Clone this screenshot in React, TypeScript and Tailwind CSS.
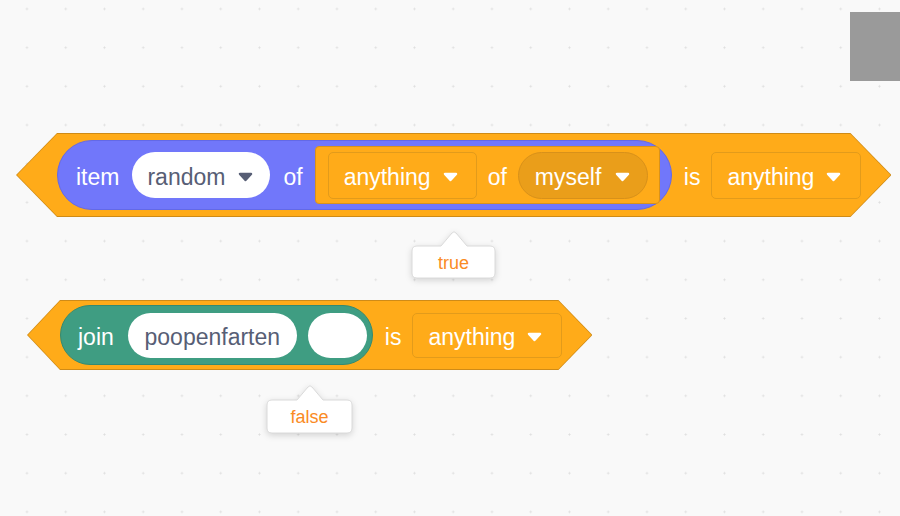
import React from 'react';

const font = "font-['Liberation_Sans',Arial,Helvetica,sans-serif]";

function Arrow(props: { dark?: boolean }) {
  const color = props.dark ? '#575E75' : '#FFFFFF';
  return (
    <svg width="15" height="10" viewBox="0 0 15 10" className="mt-[3px] shrink-0">
      <path
        d="M2 2 H13 L7.5 8 Z"
        fill={color}
        stroke={color}
        strokeWidth="2.5"
        strokeLinejoin="round"
      />
    </svg>
  );
}

function Label(props: { children: React.ReactNode; className?: string }) {
  return <span className={`pt-[4px] ${props.className || 'text-white'}`}>{props.children}</span>;
}

function Dropdown(props: { label: string; h: string; w: string }) {
  return (
    <div
      className={`flex items-center ${props.h} ${props.w} shrink-0 rounded-[5px] border border-[#E29B1B] bg-[#FFAB19] pl-[15px] pr-[18px] gap-[12px]`}
    >
      <Label>{props.label}</Label>
      <Arrow />
    </div>
  );
}

function Tooltip(props: { text: string; left: number; top: number; width: number; height: number; tip: number }) {
  const { width: w, height: h, tip } = props;
  const r = 5;
  const y0 = 17;
  const x1 = w + 1;
  const y1 = y0 + h;
  const d = `M${1 + r} ${y0} H${tip - 13} L${tip - 2} 4 Q${tip} 1.5 ${tip + 2} 4 L${tip + 13} ${y0} H${x1 - r} Q${x1} ${y0} ${x1} ${y0 + r} V${y1 - r} Q${x1} ${y1} ${x1 - r} ${y1} H${1 + r} Q1 ${y1} 1 ${y1 - r} V${y0 + r} Q1 ${y0} ${1 + r} ${y0} Z`;
  return (
    <div className="absolute" style={{ left: props.left, top: props.top, width: w + 2, height: y1 + 1 }}>
      <svg width={w + 2} height={y1 + 1} className="absolute inset-0 drop-shadow-[0_2px_3px_rgba(0,0,0,0.15)]">
        <path d={d} fill="#FFFFFF" stroke="#DADADA" strokeWidth="1" />
      </svg>
      <div className="absolute left-0 right-0 top-[17px] bottom-0 flex items-center justify-center text-[18px] text-[#FA8B24]">
        {props.text}
      </div>
    </div>
  );
}

export default function App() {
  return (
    <div
      className={`relative w-[900px] h-[516px] overflow-hidden bg-[#F9F9F9] ${font} text-[23px] leading-none bg-[radial-gradient(circle,#DEDEDE_0.8px,transparent_1.3px)] bg-[size:38.75px_38.7px] bg-[position:7.6px_-10.4px]`}
    >
      {/* scroll handle */}
      <div className="absolute top-[12px] right-0 w-[50px] h-[69px] bg-[#9A9A9A]" />

      {/* block 1 */}
      <div className="absolute left-[16px] top-[133px] h-[84px] bg-[#CF8B17] p-px [clip-path:polygon(0_50%,41px_0,calc(100%-41px)_0,100%_50%,calc(100%-41px)_100%,41px_100%)]">
        <div className="flex h-full items-center gap-[11px] bg-[#FFAB19] pl-[40px] pr-[29px] [clip-path:polygon(0_50%,40px_0,calc(100%-40px)_0,100%_50%,calc(100%-40px)_100%,40px_100%)]">
          <div className="flex h-[70px] items-center gap-[13px] rounded-full border border-[#6369E6] bg-[#7177FA] pl-[18px] pr-[11px]">
            <Label>item</Label>
            <div className="flex h-[46px] w-[138px] items-center gap-[13px] rounded-full bg-white pl-[15px]">
              <Label className="text-[#575E75]">random</Label>
              <Arrow dark />
            </div>
            <Label>of</Label>
            <div className="-ml-[1px] flex h-[58px] items-center gap-[11px] rounded-[4px] border border-[#D9921A] bg-[#FFAB19] pl-[12px] pr-[11px]">
              <Dropdown label="anything" h="h-[47px]" w="w-[149px]" />
              <Label>of</Label>
              <div className="flex h-[47px] w-[130px] items-center gap-[14px] rounded-full border border-[#D8911A] bg-[#EA9E1A] pl-[16px]">
                <Label>myself</Label>
                <Arrow />
              </div>
            </div>
          </div>
          <Label className="ml-[1px] text-white">is</Label>
          <Dropdown label="anything" h="h-[47px]" w="w-[150px]" />
        </div>
      </div>

      <Tooltip text="true" left={411} top={229} width={83} height={32} tip={43} />

      {/* block 2 */}
      <div className="absolute left-[27px] top-[300px] h-[70px] bg-[#CF8B17] p-px [clip-path:polygon(0_50%,33px_0,calc(100%-34px)_0,100%_50%,calc(100%-34px)_100%,33px_100%)]">
        <div className="flex h-full items-center gap-[11px] bg-[#FFAB19] pl-[32px] pr-[29px] [clip-path:polygon(0_50%,32px_0,calc(100%-33px)_0,100%_50%,calc(100%-33px)_100%,32px_100%)]">
          <div className="flex h-[60px] items-center gap-[11px] rounded-full border border-[#358A71] bg-[#3F9D82] pl-[17px] pr-[5px]">
            <Label className="mr-[3px] text-white">join</Label>
            <div className="flex h-[45px] w-[169px] items-center justify-center rounded-full bg-white">
              <Label className="text-[#575E75]">poopenfarten</Label>
            </div>
            <div className="h-[45px] w-[59px] rounded-full bg-white" />
          </div>
          <Label className="ml-[1px] text-white">is</Label>
          <Dropdown label="anything" h="h-[45px]" w="w-[150px]" />
        </div>
      </div>

      <Tooltip text="false" left={266} top={383} width={85} height={33} tip={44} />
    </div>
  );
}
